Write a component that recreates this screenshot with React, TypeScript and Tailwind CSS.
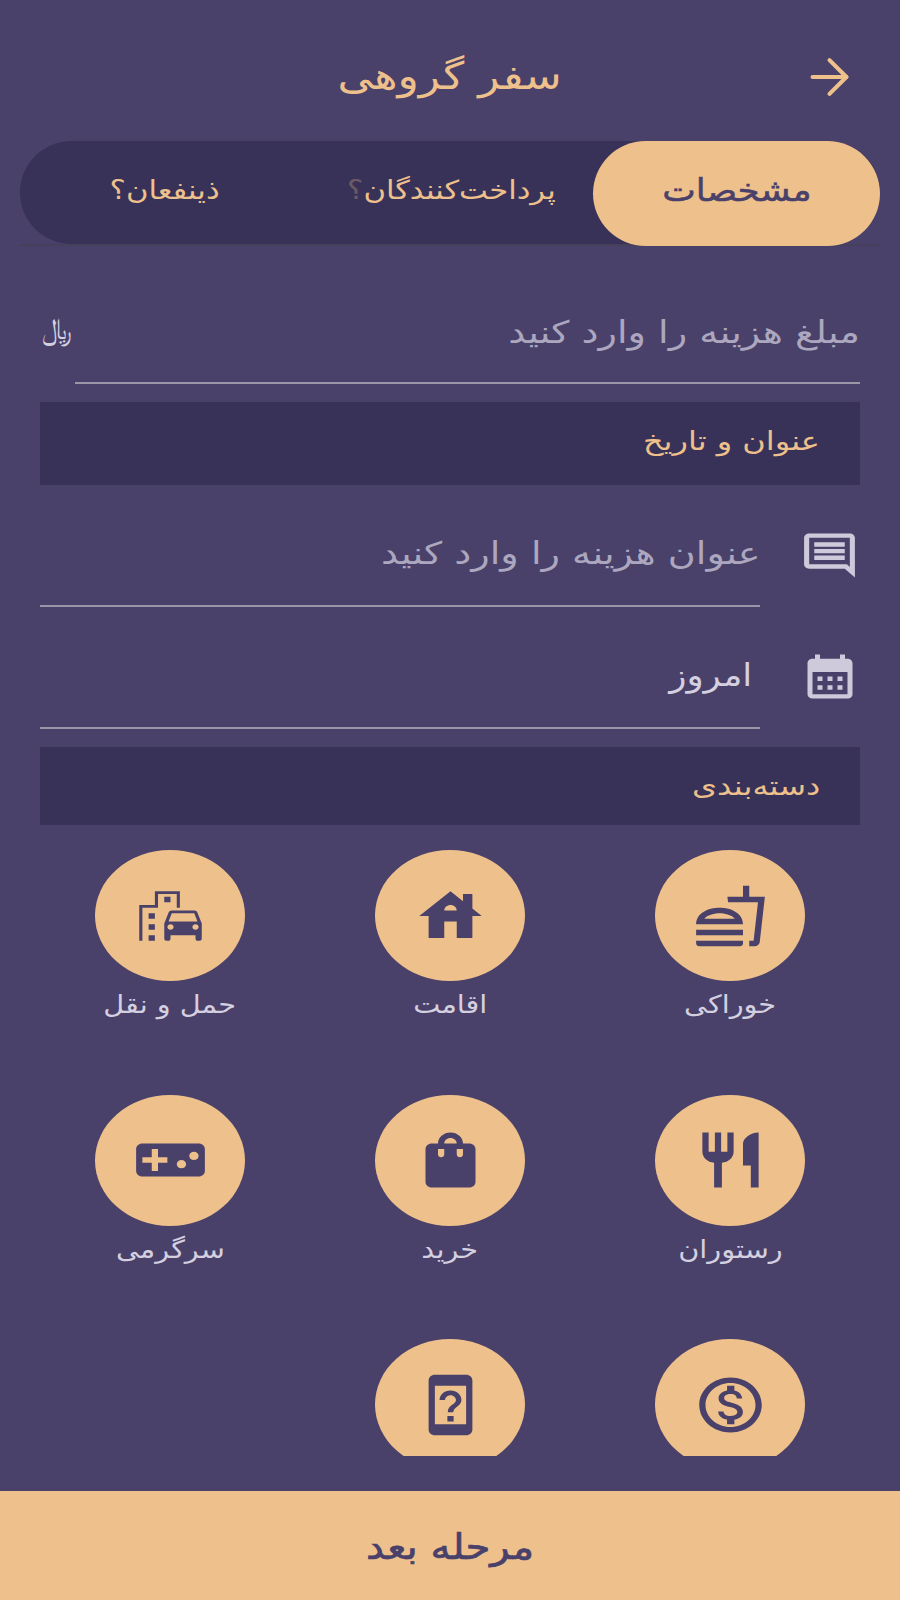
import React from "react";
import { ArrowRight } from "lucide-react";
import {
  MdOutlineFastfood,
  MdHouse,
  MdEmojiTransportation,
  MdRestaurant,
  MdShoppingBag,
  MdVideogameAsset,
  MdOutlineMonetizationOn,
  MdOutlineDeviceUnknown,
  MdOutlineComment,
  MdCalendarMonth,
} from "react-icons/md";

const categories = [
  { id: 1, label: "خوراکی", icon: MdOutlineFastfood },
  { id: 2, label: "اقامت", icon: MdHouse },
  { id: 3, label: "حمل و نقل", icon: MdEmojiTransportation },
  { id: 4, label: "رستوران", icon: MdRestaurant },
  { id: 5, label: "خرید", icon: MdShoppingBag },
  { id: 6, label: "سرگرمی", icon: MdVideogameAsset },
  { id: 7, label: "", icon: MdOutlineMonetizationOn },
  { id: 8, label: "", icon: MdOutlineDeviceUnknown },
];

function Stretch({ children, className }: { children: React.ReactNode; className?: string }) {
  return <span className={"inline-block whitespace-nowrap " + (className || "")}>{children}</span>;
}

export default function App() {
  return (
    <div dir="rtl" className="h-[1600px] w-[900px] flex flex-col overflow-hidden bg-[#49416a] font-['DejaVu_Sans',sans-serif]">
      <div className="h-[141px] shrink-0 flex items-center justify-between px-[36px] pt-[12px]">
        <ArrowRight className="w-[69px] h-[58px] text-[#eec08c] -scale-x-100 rotate-180" strokeWidth={1.7} />
        <div className="flex-1 text-center">
          <Stretch className="text-[38px] text-[#eec08c] scale-x-[1.16]">سفر گروهی</Stretch>
        </div>
        <div className="w-[69px]" />
      </div>

      <div className="mx-[20px] shrink-0 border-b-2 border-[#45405c]">
        <div className="h-[103px] rounded-[52px] bg-[#383258] flex">
          <div className="w-[287px] h-[105px] rounded-[56px] bg-[#eec08c] flex items-center justify-center pb-[6px]">
            <Stretch className="text-[31px] text-[#49416a] scale-x-[1.15] [-webkit-text-stroke:0.5px_#49416a]">مشخصات</Stretch>
          </div>
          <div className="w-[290px] flex items-center justify-center pb-[4px] pl-[6px]">
            <Stretch className="text-[26px] text-[#eec08c] scale-x-[1.18]">
              پرداخت‌کنندگان<span className="text-[#eec08c]/30">؟</span>
            </Stretch>
          </div>
          <div className="flex-1 flex items-center justify-center pb-[4px] pl-[6px]">
            <Stretch className="text-[26px] text-[#eec08c] scale-x-[1.18]">ذینفعان؟</Stretch>
          </div>
        </div>
      </div>

      <div className="flex-1 flex flex-col min-h-0">
        <div className="h-[1210px] overflow-hidden px-[40px]">
          <div className="flex items-center mt-[54px] h-[84px]">
            <div className="flex-1 h-[84px] border-b-2 border-[#9a96a8] flex items-center pb-[18px]">
              <Stretch className="text-[31px] text-[#aca7bf] origin-right scale-x-[1.23]">مبلغ هزینه را وارد کنید</Stretch>
            </div>
            <div className="w-[35px] text-[#d5d0e0] text-[30px] pb-[28px] pl-[7px] text-left">
              <Stretch className="origin-left scale-x-[0.9]">﷼</Stretch>
            </div>
          </div>

          <div className="mt-[18px] h-[83px] bg-[#383258] flex items-center pr-[40px] pb-[4px]">
            <Stretch className="text-[26px] text-[#eec08c] origin-right scale-x-[1.23]">عنوان و تاریخ</Stretch>
          </div>

          <div className="flex items-stretch mt-[18px] h-[104px]">
            <div className="w-[100px] flex items-center justify-start">
              <MdOutlineComment preserveAspectRatio="none" className="w-[61px] h-[53px] text-[#cfc9dc]" />
            </div>
            <div className="flex-1 border-b-2 border-[#9a96a8] flex items-center pb-[2px]">
              <Stretch className="text-[31px] text-[#aca7bf] origin-right scale-x-[1.23]">عنوان هزینه را وارد کنید</Stretch>
            </div>
          </div>

          <div className="flex items-stretch mt-[16px] h-[106px]">
            <div className="w-[100px] flex items-center justify-start pt-[1px]">
              <MdCalendarMonth preserveAspectRatio="none" className="w-[60px] h-[53px] text-[#cfc9dc]" />
            </div>
            <div className="flex-1 border-b-2 border-[#9a96a8] flex items-center pr-[8px]">
              <Stretch className="text-[31px] text-[#d5d0e0] origin-right scale-x-[1.15]">امروز</Stretch>
            </div>
          </div>

          <div className="mt-[18px] h-[78px] bg-[#383258] flex items-center pr-[40px]">
            <Stretch className="text-[26px] text-[#eec08c] origin-right scale-x-[1.23]">دسته‌بندی</Stretch>
          </div>

          <div className="grid grid-cols-3 mt-[25px] -mx-[10px]">
            {categories.map((c) => {
              const Icon = c.icon;
              return (
                <div key={c.id} className="h-[244.5px] flex flex-col items-center">
                  <div className="w-[150px] h-[131px] shrink-0 rounded-[50%] bg-[#eec08c] flex items-center justify-center">
                    <Icon preserveAspectRatio="none" className="w-[75px] h-[66px] text-[#49416a]" />
                  </div>
                  {c.label && <Stretch className="mt-[5px] text-[25px] text-[#d5d0e0] scale-x-[1.15]">{c.label}</Stretch>}
                </div>
              );
            })}
          </div>
        </div>
        <div className="h-[35px] shrink-0" />
      </div>

      <div className="h-[109px] shrink-0 bg-[#eec08c] flex items-center justify-center pt-[3px]">
        <Stretch className="text-[35px] text-[#49416a] scale-x-[1.15] [-webkit-text-stroke:0.7px_#49416a]">مرحله بعد</Stretch>
      </div>
    </div>
  );
}
